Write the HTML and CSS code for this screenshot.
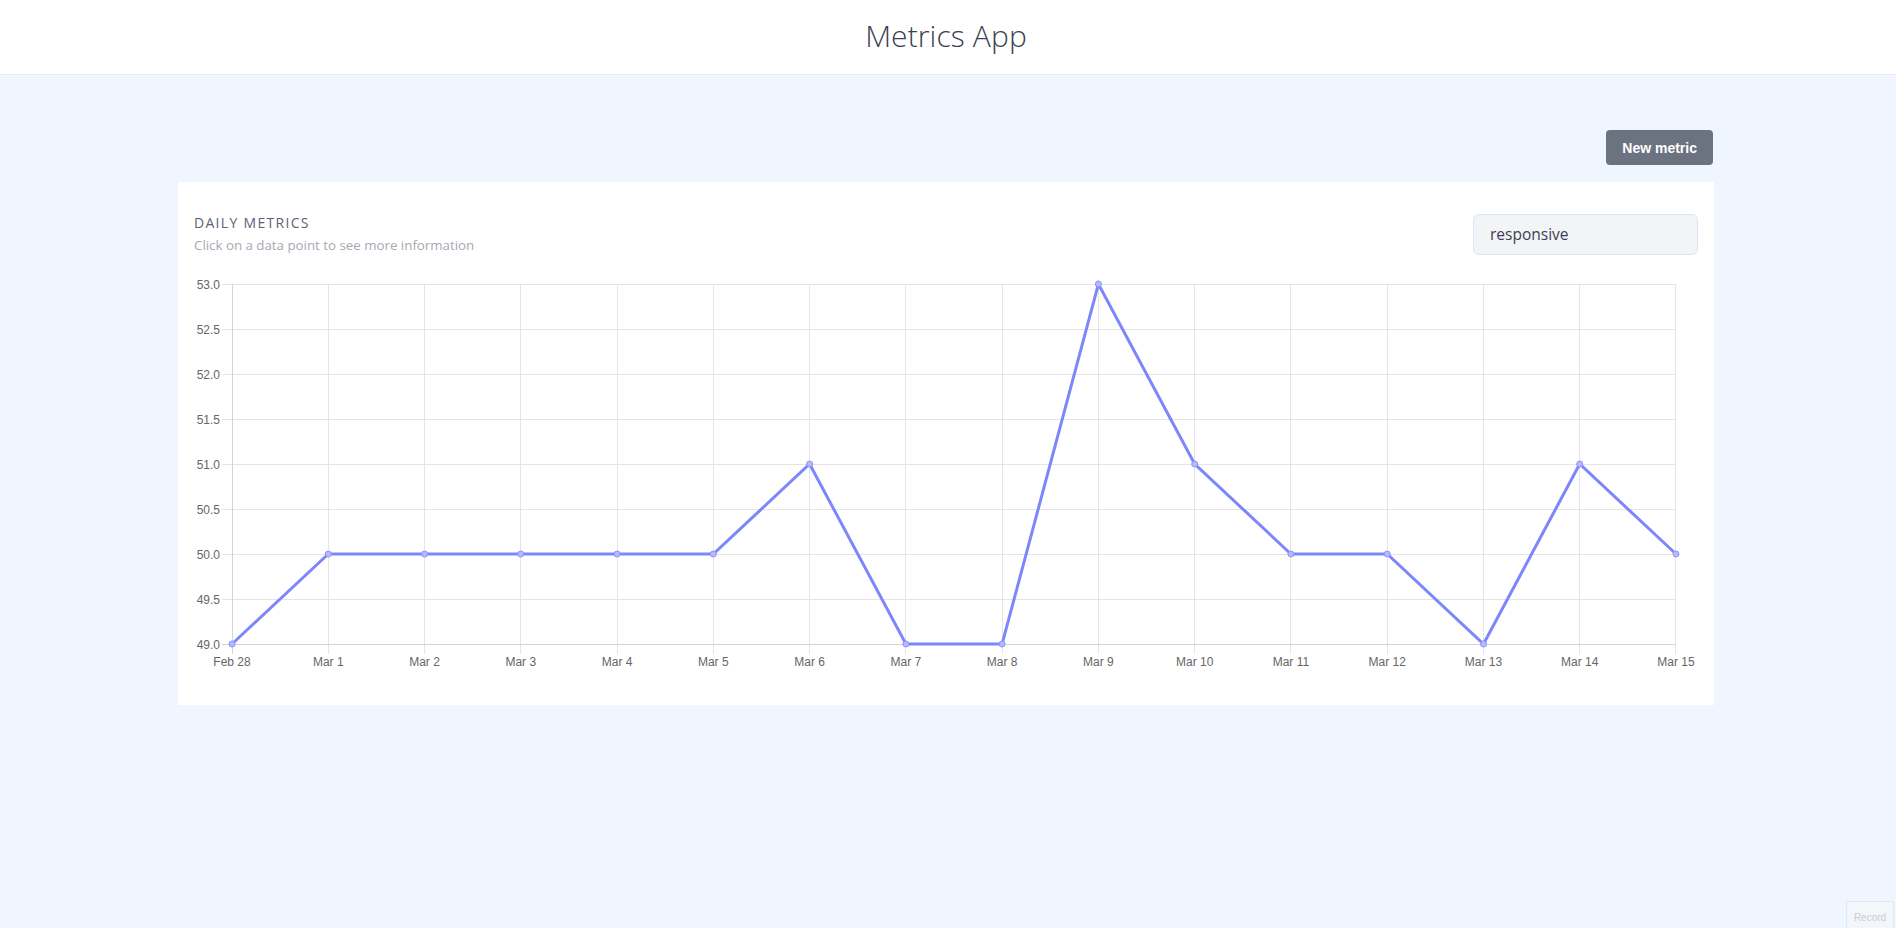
FILE: index.html
```html
<!DOCTYPE html>
<html lang="en">
<head>
<meta charset="utf-8">
<title>Metrics App</title>
<link rel="stylesheet" href="styles.css">
</head>
<body>
<header class="topbar">
  <h1 class="app-title">Metrics App</h1>
</header>
<main class="container">
  <div class="actions">
    <button class="btn-new" type="button">New metric</button>
  </div>
  <section class="card">
    <div class="card-head">
      <div class="card-titles">
        <h2 class="card-title">Daily metrics</h2>
        <p class="card-sub">Click on a data point to see more information</p>
      </div>
      <div class="filter">responsive</div>
    </div>
    <svg class="chart" width="1504" height="428" viewBox="0 0 1504 428" xmlns="http://www.w3.org/2000/svg">
      <g class="grid" stroke="#e5e5e5" stroke-width="1" shape-rendering="crispEdges">
        <line x1="28" y1="23.5" x2="1482" y2="23.5"/>
        <line x1="28" y1="68.5" x2="1482" y2="68.5"/>
        <line x1="28" y1="113.5" x2="1482" y2="113.5"/>
        <line x1="28" y1="158.5" x2="1482" y2="158.5"/>
        <line x1="28" y1="203.5" x2="1482" y2="203.5"/>
        <line x1="28" y1="248.5" x2="1482" y2="248.5"/>
        <line x1="28" y1="293.5" x2="1482" y2="293.5"/>
        <line x1="28" y1="338.5" x2="1482" y2="338.5"/>
        <line x1="134.5" y1="23" x2="134.5" y2="393"/>
        <line x1="230.5" y1="23" x2="230.5" y2="393"/>
        <line x1="326.5" y1="23" x2="326.5" y2="393"/>
        <line x1="423.5" y1="23" x2="423.5" y2="393"/>
        <line x1="519.5" y1="23" x2="519.5" y2="393"/>
        <line x1="615.5" y1="23" x2="615.5" y2="393"/>
        <line x1="711.5" y1="23" x2="711.5" y2="393"/>
        <line x1="808.5" y1="23" x2="808.5" y2="393"/>
        <line x1="904.5" y1="23" x2="904.5" y2="393"/>
        <line x1="1000.5" y1="23" x2="1000.5" y2="393"/>
        <line x1="1096.5" y1="23" x2="1096.5" y2="393"/>
        <line x1="1193.5" y1="23" x2="1193.5" y2="393"/>
        <line x1="1289.5" y1="23" x2="1289.5" y2="393"/>
        <line x1="1385.5" y1="23" x2="1385.5" y2="393"/>
        <line x1="1481.5" y1="23" x2="1481.5" y2="393"/>
      </g>
      <g class="axes" stroke="#d4d4d4" stroke-width="1" shape-rendering="crispEdges">
        <line x1="38.5" y1="23" x2="38.5" y2="393"/>
        <line x1="28" y1="383.5" x2="1482" y2="383.5"/>
      </g>
      <g class="ylabels" font-family="'Liberation Sans', Arial, sans-serif" font-size="12" fill="#666" text-anchor="end">
        <text x="26" y="27.5">53.0</text>
        <text x="26" y="72.5">52.5</text>
        <text x="26" y="117.5">52.0</text>
        <text x="26" y="162.5">51.5</text>
        <text x="26" y="207.5">51.0</text>
        <text x="26" y="252.5">50.5</text>
        <text x="26" y="297.5">50.0</text>
        <text x="26" y="342.5">49.5</text>
        <text x="26" y="387.5">49.0</text>
      </g>
      <g class="xlabels" font-family="'Liberation Sans', Arial, sans-serif" font-size="12" fill="#666" text-anchor="middle">
        <text x="38" y="405">Feb 28</text>
        <text x="134.3" y="405">Mar 1</text>
        <text x="230.5" y="405">Mar 2</text>
        <text x="326.8" y="405">Mar 3</text>
        <text x="423.1" y="405">Mar 4</text>
        <text x="519.3" y="405">Mar 5</text>
        <text x="615.6" y="405">Mar 6</text>
        <text x="711.9" y="405">Mar 7</text>
        <text x="808.1" y="405">Mar 8</text>
        <text x="904.4" y="405">Mar 9</text>
        <text x="1000.7" y="405">Mar 10</text>
        <text x="1096.9" y="405">Mar 11</text>
        <text x="1193.2" y="405">Mar 12</text>
        <text x="1289.5" y="405">Mar 13</text>
        <text x="1385.7" y="405">Mar 14</text>
        <text x="1482" y="405">Mar 15</text>
      </g>
      <polyline fill="none" stroke="#7d87fb" stroke-width="3" stroke-linejoin="miter"
        points="38,383 134.3,293 230.5,293 326.8,293 423.1,293 519.3,293 615.6,203 711.9,383 808.1,383 904.4,23 1000.7,203 1096.9,293 1193.2,293 1289.5,383 1385.7,203 1482,293"/>
      <g class="points" fill="#b4bafc" stroke="#8a93fb" stroke-width="1">
        <circle cx="38" cy="383" r="3"/>
        <circle cx="134.3" cy="293" r="3"/>
        <circle cx="230.5" cy="293" r="3"/>
        <circle cx="326.8" cy="293" r="3"/>
        <circle cx="423.1" cy="293" r="3"/>
        <circle cx="519.3" cy="293" r="3"/>
        <circle cx="615.6" cy="203" r="3"/>
        <circle cx="711.9" cy="383" r="3"/>
        <circle cx="808.1" cy="383" r="3"/>
        <circle cx="904.4" cy="23" r="3"/>
        <circle cx="1000.7" cy="203" r="3"/>
        <circle cx="1096.9" cy="293" r="3"/>
        <circle cx="1193.2" cy="293" r="3"/>
        <circle cx="1289.5" cy="383" r="3"/>
        <circle cx="1385.7" cy="203" r="3"/>
        <circle cx="1482" cy="293" r="3"/>
      </g>
    </svg>
  </section>
</main>
<div class="record">Record</div>
</body>
</html>
```

FILE: styles.css
```css
* { box-sizing: border-box; }

html, body {
  margin: 0;
  padding: 0;
}

body {
  background: #eff6ff;
  font-family: "Open Sans", "Noto Sans", sans-serif;
  min-height: 928px;
}

.topbar {
  height: 75px;
  background: #ffffff;
  border-bottom: 1px solid #e3eaf4;
  display: flex;
  align-items: center;
  justify-content: center;
  padding-right: 4px;
}

.app-title {
  margin: 0;
  font-weight: 300;
  font-size: 30px;
  color: #3b3f52;
  letter-spacing: 0.1px;
  position: relative;
  top: -2px;
}

.container {
  width: 1536px;
  margin: 0 0 0 calc(50% - 770px);
  padding-top: 55px;
}

.actions {
  display: flex;
  justify-content: flex-end;
  margin-bottom: 17px;
}

.btn-new {
  height: 35px;
  padding: 0 16px;
  background: #6b7280;
  color: #ffffff;
  border: none;
  border-radius: 4px;
  font-family: "Liberation Sans", Arial, sans-serif;
  font-weight: 700;
  font-size: 14px;
  margin-right: 1px;
}

.card {
  background: #ffffff;
  padding: 31px 16px 16px 16px;
}

.card-head {
  display: flex;
  justify-content: space-between;
  align-items: center;
  margin-bottom: 6px;
}

.card-title {
  margin: 0 0 2px 0;
  font-size: 14px;
  line-height: 20px;
  font-weight: 400;
  text-transform: uppercase;
  letter-spacing: 1.3px;
  color: #5b6275;
}

.card-sub {
  margin: 0;
  font-size: 13.3px;
  line-height: 20px;
  color: #a7a9b3;
}

.filter {
  width: 225px;
  height: 41px;
  background: #f3f4f6;
  border: 1px solid #dbe5fa;
  border-radius: 6px;
  padding: 0 16px;
  display: flex;
  align-items: center;
  font-size: 15.5px;
  color: #3d4055;
}

.chart {
  display: block;
}

.record {
  position: fixed;
  right: 2px;
  bottom: -4px;
  width: 48px;
  height: 31px;
  border: 1px solid #e3e7ee;
  border-bottom: none;
  color: #c9ccd3;
  font-family: "Liberation Sans", Arial, sans-serif;
  font-size: 10px;
  display: flex;
  align-items: center;
  justify-content: center;
  background: #f3f7fc;
}
```
